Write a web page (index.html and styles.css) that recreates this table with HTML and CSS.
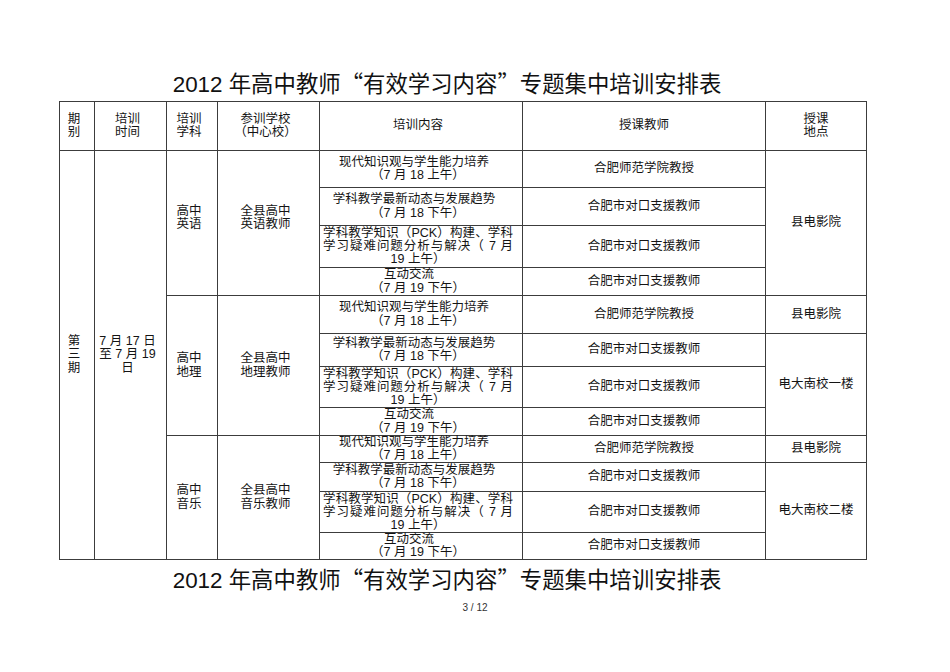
FILE: index.html
```html
<!DOCTYPE html>
<html lang="zh-CN">
<head>
<meta charset="utf-8">
<title>2012 年高中教师“有效学习内容”专题集中培训安排表</title>
<link rel="stylesheet" href="styles.css">
</head>
<body>
<div class="page">
  <h1 class="title">2012 年高中教师<span class="q">“</span>有效学习内容<span class="q">”</span>专题集中培训安排表</h1>
  <div class="sheet">
    <div class="c"><div>期<br>别</div></div>
    <div class="c"><div>培训<br>时间</div></div>
    <div class="c"><div>培训<br>学科</div></div>
    <div class="c"><div>参训学校<br>（中心校）</div></div>
    <div class="c"><div>培训内容</div></div>
    <div class="c nc"><div>授课教师</div></div>
    <div class="c nc"><div>授课<br>地点</div></div>

    <!-- group 1 -->
    <div class="c r12"><div>第<br>三<br>期</div></div>
    <div class="c r12"><div>7 月 17 日<br>至 7 月 19<br>日</div></div>
    <div class="c r4"><div class="up">高中<br>英语</div></div>
    <div class="c r4"><div class="up">全县高中<br>英语教师</div></div>
    <div class="c ct"><div><span class="ln sh4">现代知识观与学生能力培养</span><span class="ln">（7 月 18 上午）</span></div></div>
    <div class="c nc"><div>合肥师范学院教授</div></div>
    <div class="c nc r4"><div>县电影院</div></div>
    <div class="c ct"><div><span class="ln sh4">学科教学最新动态与发展趋势</span><span class="ln">（7 月 18 下午）</span></div></div>
    <div class="c nc"><div>合肥市对口支援教师</div></div>
    <div class="c ct"><div class="just"><span class="jl">学科教学知识（PCK）构建、学科</span><span class="jl">学习疑难问题分析与解决（ 7 月</span><span class="ln">19 上午）</span></div></div>
    <div class="c nc"><div>合肥市对口支援教师</div></div>
    <div class="c ct"><div><span class="ln sh9">互动交流</span><span class="ln">（7 月 19 下午）</span></div></div>
    <div class="c nc"><div>合肥市对口支援教师</div></div>

    <!-- group 2 -->
    <div class="c r4"><div>高中<br>地理</div></div>
    <div class="c r4"><div>全县高中<br>地理教师</div></div>
    <div class="c ct"><div><span class="ln sh4">现代知识观与学生能力培养</span><span class="ln">（7 月 18 上午）</span></div></div>
    <div class="c nc"><div>合肥师范学院教授</div></div>
    <div class="c nc"><div>县电影院</div></div>
    <div class="c ct"><div><span class="ln sh4">学科教学最新动态与发展趋势</span><span class="ln">（7 月 18 下午）</span></div></div>
    <div class="c nc"><div>合肥市对口支援教师</div></div>
    <div class="c nc r3"><div>电大南校一楼</div></div>
    <div class="c ct"><div class="just"><span class="jl">学科教学知识（PCK）构建、学科</span><span class="jl">学习疑难问题分析与解决（ 7 月</span><span class="ln">19 上午）</span></div></div>
    <div class="c nc"><div>合肥市对口支援教师</div></div>
    <div class="c ct"><div><span class="ln sh9">互动交流</span><span class="ln">（7 月 19 下午）</span></div></div>
    <div class="c nc"><div>合肥市对口支援教师</div></div>

    <!-- group 3 -->
    <div class="c r4"><div>高中<br>音乐</div></div>
    <div class="c r4"><div>全县高中<br>音乐教师</div></div>
    <div class="c ct"><div><span class="ln sh4">现代知识观与学生能力培养</span><span class="ln">（7 月 18 上午）</span></div></div>
    <div class="c nc"><div>合肥师范学院教授</div></div>
    <div class="c nc"><div>县电影院</div></div>
    <div class="c ct"><div><span class="ln sh4">学科教学最新动态与发展趋势</span><span class="ln">（7 月 18 下午）</span></div></div>
    <div class="c nc"><div>合肥市对口支援教师</div></div>
    <div class="c nc r3"><div>电大南校二楼</div></div>
    <div class="c ct"><div class="just"><span class="jl">学科教学知识（PCK）构建、学科</span><span class="jl">学习疑难问题分析与解决（ 7 月</span><span class="ln">19 上午）</span></div></div>
    <div class="c nc"><div>合肥市对口支援教师</div></div>
    <div class="c ct"><div><span class="ln sh9">互动交流</span><span class="ln">（7 月 19 下午）</span></div></div>
    <div class="c nc"><div>合肥市对口支援教师</div></div>
  </div>
  <h1 class="title title-bottom">2012 年高中教师<span class="q">“</span>有效学习内容<span class="q">”</span>专题集中培训安排表</h1>
  <div class="pageno">3 / 12</div>
</div>
</body>
</html>
```
FILE: styles.css
```css
html, body {
  margin: 0;
  padding: 0;
  background: #ffffff;
}

body {
  font-family: "Liberation Sans", "Noto Sans CJK SC", sans-serif;
  color: #141414;
}

.page {
  padding-top: 69px;
}

.title {
  margin: 0;
  font-weight: normal;
  font-size: 22.4px;
  line-height: 26px;
  text-align: center;
  padding-right: 56px;
  color: #111111;
  white-space: nowrap;
}

.title .q {
  font-family: "Noto Sans CJK SC", sans-serif;
}

.title-bottom {
  margin-top: 5px;
}

.pageno {
  margin-top: 8px;
  font-size: 10px;
  line-height: 12px;
  text-align: center;
  color: #333333;
}

.sheet {
  margin: 3px 0 0 59px;
  width: 807px;
  display: grid;
  grid-template-columns: 35px 72px 51px 102px 203px 243px 101px;
  grid-template-rows: 49px 37px 38px 42px 28px 38px 33px 41px 28px 27px 29px 41px 27px;
  border-top: 1px solid #3c3c3c;
  border-left: 1px solid #3c3c3c;
  font-size: 12.5px;
  line-height: 13.5px;
}

.c {
  box-sizing: border-box;
  border-right: 1px solid #3c3c3c;
  border-bottom: 1px solid #3c3c3c;
  display: flex;
  align-items: center;
  justify-content: center;
  text-align: center;
  padding: 0 6px 0 0;
  min-width: 0;
  min-height: 0;
  white-space: nowrap;
}

.c.nc {
  padding: 0;
}

.c.ct {
  padding: 0 9px 0 3px;
}

.r12 { grid-row: span 12; }
.r4 { grid-row: span 4; }
.r3 { grid-row: span 3; }

.up {
  position: relative;
  top: -5px;
}

.ln {
  display: block;
}

.sh4 { padding-right: 8px; }
.sh9 { padding-right: 18px; }

.just {
  width: 100%;
}

.jl {
  display: block;
  text-align: justify;
  text-align-last: justify;
  text-justify: inter-character;
  line-height: 13px;
}

.just .ln {
  line-height: 13px;
}
```
